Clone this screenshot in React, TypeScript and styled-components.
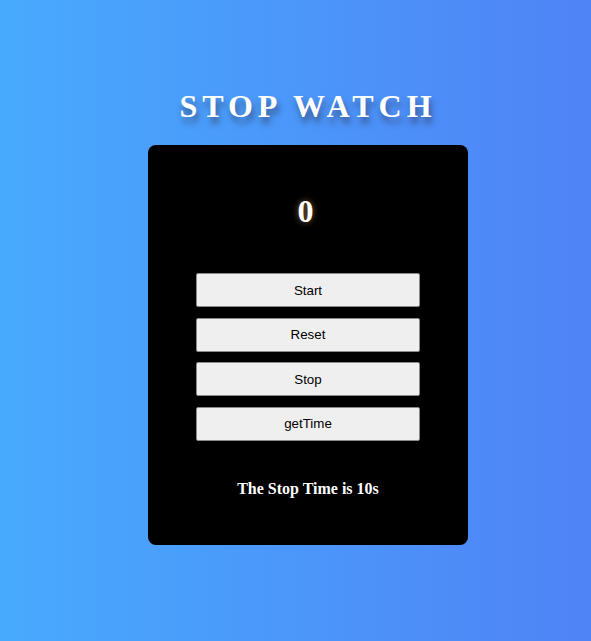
import React from 'react';
import styled, { createGlobalStyle } from 'styled-components';

const GlobalStyle = createGlobalStyle`
  html, body {
    margin: 0;
    padding: 0;
  }
  body {
    font-family: "Liberation Serif", "Times New Roman", serif;
  }
`;

const Page = styled.div`
  width: 100%;
  min-height: 641px;
  box-sizing: border-box;
  padding: 88px 0 0 25px;
  display: flex;
  flex-direction: column;
  align-items: center;
  background: linear-gradient(to right, #48aafd 0%, #4f83f6 100%);
`;

const Title = styled.h1`
  margin: 0 0 20px 0;
  font-family: "Liberation Serif", "Times New Roman", serif;
  font-size: 32px;
  font-weight: bold;
  letter-spacing: 5px;
  line-height: 37px;
  color: #ffffff;
  text-shadow: 2px 6px 6px rgba(40, 40, 60, 0.55);
`;

const Card = styled.div`
  width: 320px;
  height: 400px;
  box-sizing: border-box;
  padding-top: 48px;
  background: #000000;
  border-radius: 8px;
  display: flex;
  flex-direction: column;
  align-items: center;
`;

const Counter = styled.h2`
  margin: 0 0 43px 0;
  padding-right: 5px;
  font-size: 32px;
  line-height: 37px;
  font-weight: bold;
  color: #ffffff;
  text-shadow: 0 0 6px rgba(255, 180, 100, 0.55);
`;

const Buttons = styled.div`
  display: flex;
  flex-direction: column;
  gap: 10.67px;
`;

const Button = styled.button`
  width: 224px;
  height: 34px;
  background: #efefef;
  border: 1px solid #8a8a8a;
  border-radius: 2px;
  font-family: "Liberation Sans", Arial, sans-serif;
  font-size: 13.33px;
  color: #000000;
  cursor: pointer;
`;

const Result = styled.h3`
  margin: 39px 0 0 0;
  font-size: 16px;
  line-height: 18px;
  font-weight: bold;
  color: #ffffff;
`;

const App: React.FC = () => {
  return (
    <>
      <GlobalStyle />
      <Page>
        <Title>STOP WATCH</Title>
        <Card>
          <Counter>0</Counter>
          <Buttons>
            <Button>Start</Button>
            <Button>Reset</Button>
            <Button>Stop</Button>
            <Button>getTime</Button>
          </Buttons>
          <Result>The Stop Time is 10s</Result>
        </Card>
      </Page>
    </>
  );
};

export default App;
